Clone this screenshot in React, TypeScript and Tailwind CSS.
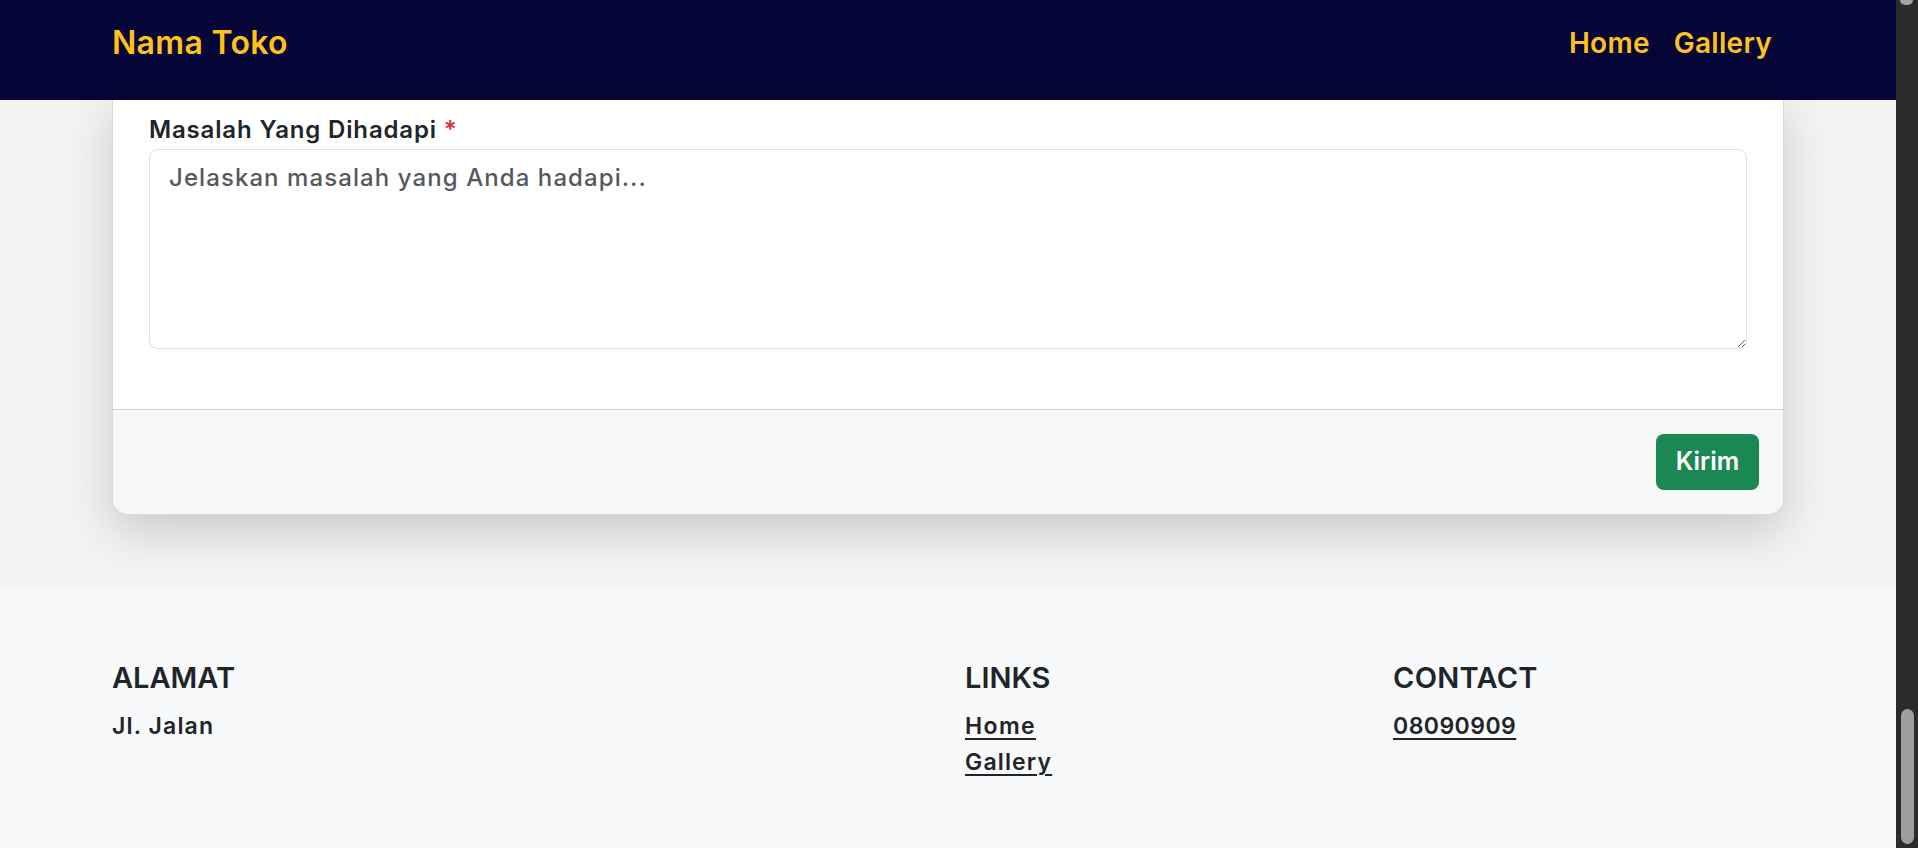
import React from 'react';

const font = { fontFamily: 'Inter, "Noto Sans", sans-serif' };

function Header() {
  return (
    <header className="h-[100px] shrink-0 bg-[#050637] flex items-center justify-between pl-[112px] pr-[112px] pb-[14px]">
      <a className="text-[32px] font-semibold text-[#ffc21a] tracking-[0.01em]">Nama Toko</a>
      <nav className="flex items-center">
        <a className="px-3 text-[28px] font-semibold text-[#ffc21a] tracking-[0.01em]">Home</a>
        <a className="px-3 text-[28px] font-semibold text-[#ffc21a] tracking-[0.01em]">Gallery</a>
      </nav>
    </header>
  );
}

function ComplaintCard() {
  return (
    <div className="mx-[112px] bg-white rounded-b-2xl border-x border-b border-black/15 shadow-[0_1rem_3rem_rgba(0,0,0,0.175)] overflow-hidden">
      <div className="px-9 pt-[15px] pb-[60px]">
        <label className="block mb-[4px] text-[24px] leading-[30px] font-semibold text-[#212529] tracking-[0.035em]">
          Masalah Yang Dihadapi <span className="text-[#dc3545]">*</span>
        </label>
        <textarea
          className="block w-full h-[200px] rounded-lg border border-[#dee2e6] px-[19px] py-4 text-[24px] leading-6 font-medium text-[#212529] tracking-[0.045em] placeholder:text-[#55595e] outline-none"
          placeholder="Jelaskan masalah yang Anda hadapi..."
        />
      </div>
      <div className="bg-[#f7f7f7] border-t border-[#cfcfcf] px-6 py-6 flex justify-end">
        <button className="w-[103px] h-[56px] rounded-lg bg-[#1b8753] text-white text-[25px] font-semibold">
          Kirim
        </button>
      </div>
    </div>
  );
}

function Footer() {
  return (
    <footer className="flex-1 bg-[#f8f9fa] pt-[72px] pl-[112px] text-[#212529]">
      <div className="grid grid-cols-[853px_428px_1fr]">
        <div>
          <h5 className="text-[29px] leading-9 font-semibold mb-3">ALAMAT</h5>
          <p className="text-[23px] leading-9 font-semibold tracking-[0.05em]">Jl. Jalan</p>
        </div>
        <div>
          <h5 className="text-[29px] leading-9 font-semibold mb-3">LINKS</h5>
          <a className="block text-[23px] leading-9 font-semibold underline underline-offset-4 tracking-[0.06em]">Home</a>
          <a className="block text-[23px] leading-9 font-semibold underline underline-offset-4 tracking-[0.05em]">Gallery</a>
        </div>
        <div>
          <h5 className="text-[29px] leading-9 font-semibold mb-3 tracking-[0.01em]">CONTACT</h5>
          <a className="block text-[23px] leading-9 font-semibold underline underline-offset-4 tracking-[0.02em]">08090909</a>
        </div>
      </div>
    </footer>
  );
}

function Scrollbar() {
  return (
    <div className="w-[22px] shrink-0 bg-[#2b2b2b] flex flex-col justify-between pb-[4px]">
      <div className="ml-[4px] w-[13px] h-[5px] rounded-b-md bg-[#a3a3a3]" />
      <div className="ml-[5px] w-[13px] h-[135px] rounded-full bg-[#9f9f9f]" />
    </div>
  );
}

export default function App() {
  return (
    <div className="h-[848px] w-full flex overflow-hidden" style={font}>
      <div className="flex-1 flex flex-col bg-[#f3f3f3]">
        <Header />
        <main className="pb-[73px]">
          <ComplaintCard />
        </main>
        <Footer />
      </div>
      <Scrollbar />
    </div>
  );
}
